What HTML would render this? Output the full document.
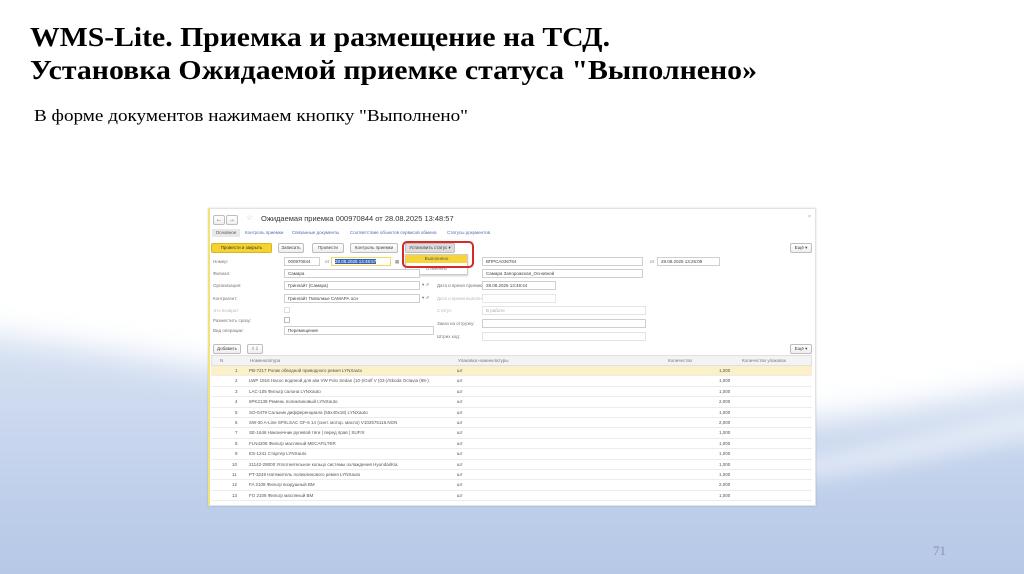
<!DOCTYPE html>
<html><head><meta charset="utf-8"><style>
*{margin:0;padding:0;box-sizing:border-box}
html,body{width:1024px;height:574px;overflow:hidden}
body{position:relative;background:#fff;font-family:"Liberation Sans",sans-serif}
.a{position:absolute;white-space:nowrap}
.lbl{font-size:4.5px;color:#777}
.in{position:absolute;border:1px solid #cfcfcf;background:#fff;height:9px;font-size:4.5px;color:#444;padding-left:3px;line-height:7px}
.btn{position:absolute;border:1px solid #bdbdbd;background:linear-gradient(#fff,#eee);height:10px;font-size:4.5px;color:#444;text-align:center;line-height:8px;border-radius:2px}
.row{position:absolute;left:211px;width:601px;height:10.4px;border-bottom:1px solid #ececec;font-size:4.5px;color:#555;line-height:10px}
.row span{position:absolute}
</style></head><body>
<svg class="a" style="left:0;top:0" width="1024" height="574">
<defs>
<linearGradient id="g1" x1="0" y1="0" x2="0" y2="1"><stop offset="0" stop-color="#d8e2f3"/><stop offset="0.6" stop-color="#bccde9"/><stop offset="1" stop-color="#b0c3e4"/></linearGradient>
<filter id="b" x="-20%" y="-20%" width="140%" height="140%"><feGaussianBlur stdDeviation="16"/></filter>
<filter id="b2" x="-20%" y="-20%" width="140%" height="140%"><feGaussianBlur stdDeviation="10"/></filter>
</defs>
<g filter="url(#b)">
<path d="M-50 330 C200 360 400 410 600 425 C800 440 950 400 1080 380 L1080 640 L-50 640 Z" fill="url(#g1)"/>
</g>
<g filter="url(#b2)">
<path d="M700 470 C850 460 950 420 1080 400 L1080 430 C950 450 850 480 700 490Z" fill="#fff" opacity="0.5"/>
</g>
<text x="30" y="46" font-family="Liberation Serif" font-weight="bold" font-size="27" textLength="580" lengthAdjust="spacingAndGlyphs">WMS-Lite. Приемка и размещение на ТСД.</text>
<text x="30" y="79" font-family="Liberation Serif" font-weight="bold" font-size="27" textLength="727" lengthAdjust="spacingAndGlyphs">Установка Ожидаемой приемке статуса "Выполнено»</text>
<text x="34" y="121" font-family="Liberation Serif" font-size="17" textLength="434" lengthAdjust="spacingAndGlyphs">В форме документов нажимаем кнопку "Выполнено"</text>
<text x="933" y="555" font-family="Liberation Serif" font-size="13" fill="#8a93a8">71</text>
</svg>

<div class="a" style="left:208px;top:208px;width:608px;height:298px;background:#fff;border:1px solid #e2e2e2;border-left:2px solid #f2e27a;box-shadow:0 0 2px rgba(0,0,0,.15)"></div>
<div class="btn" style="left:213px;top:215px;width:12px;font-size:6px">←</div>
<div class="btn" style="left:226px;top:215px;width:12px;font-size:6px">→</div>
<div class="a" style="left:246px;top:213px;font-size:8px;color:#ccc">☆</div>
<div class="a" style="left:261px;top:214px;font-size:7.5px;color:#333">Ожидаемая приемка 000970844 от 28.08.2025 13:48:57</div>
<div class="a" style="left:808px;top:214px;font-size:5px;color:#999">×</div>
<div class="a" style="left:212px;top:229px;width:28px;height:8px;background:#e8e8e8;font-size:4.5px;color:#555;text-align:center;line-height:8px">Основное</div>
<div class="a" style="left:245px;top:229px;font-size:4.5px;color:#4a6fb5;line-height:8px">Контроль приемки</div>
<div class="a" style="left:292px;top:229px;font-size:4.5px;color:#4a6fb5;line-height:8px">Связанные документы</div>
<div class="a" style="left:350px;top:229px;font-size:4.5px;color:#4a6fb5;line-height:8px">Соответствие объектов сервисов обмена</div>
<div class="a" style="left:447px;top:229px;font-size:4.5px;color:#4a6fb5;line-height:8px">Статусы документов</div>

<div class="btn" style="left:211px;top:243px;width:61px;background:#f5d230;border-color:#d8b820;color:#333">Провести и закрыть</div>
<div class="btn" style="left:278px;top:243px;width:26px">Записать</div>
<div class="btn" style="left:312px;top:243px;width:32px">Провести</div>
<div class="btn" style="left:350px;top:243px;width:48px">Контроль приемки</div>
<div class="btn" style="left:405px;top:243px;width:50px;background:#ddd">Установить статус ▾</div>
<div class="btn" style="left:790px;top:243px;width:22px">Ещё ▾</div>

<div class="a" style="left:405px;top:254px;width:63px;height:21px;background:#fff;border:1px solid #ccc;box-shadow:0 1px 2px rgba(0,0,0,.2)"></div>
<div class="a" style="left:406px;top:255px;width:61px;height:8px;background:#f7d43a;font-size:4.5px;text-align:center;line-height:8px;color:#555">Выполнено</div>
<div class="a" style="left:406px;top:266px;width:61px;font-size:4.5px;text-align:center;color:#777">Отменено</div>
<div class="a" style="left:402px;top:241px;width:72px;height:27px;border:2px solid #d42a2a;border-radius:5px"></div>

<div class="a lbl" style="left:213px;top:259px">Номер:</div>
<div class="a lbl" style="left:213px;top:271px">Филиал:</div>
<div class="a lbl" style="left:213px;top:283px">Организация:</div>
<div class="a lbl" style="left:213px;top:296px">Контрагент:</div>
<div class="a lbl" style="left:213px;top:308px;color:#bbb">Это возврат:</div>
<div class="a lbl" style="left:213px;top:318px">Разместить сразу:</div>
<div class="a lbl" style="left:213px;top:328px">Вид операции:</div>

<div class="in" style="left:284px;top:257px;width:36px">000970844</div>
<div class="a lbl" style="left:325px;top:259px">от</div>
<div class="in" style="left:331px;top:257px;width:60px;border-color:#f0d860"><span style="background:#3a63b8;color:#fff">28.08.2025 13:48:57</span></div>
<div class="a lbl" style="left:395px;top:259px">▦</div>
<div class="in" style="left:284px;top:269px;width:136px">Самара</div>
<div class="in" style="left:284px;top:281px;width:136px">Гринлайт (Самара)</div>
<div class="a lbl" style="left:422px;top:282px">▾ ⇗</div>
<div class="in" style="left:284px;top:294px;width:136px">Гринлайт Поволжье САМАРА осн</div>
<div class="a lbl" style="left:422px;top:295px">▾ ⇗</div>
<div class="a" style="left:284px;top:307px;width:6px;height:6px;border:1px solid #ddd"></div>
<div class="a" style="left:284px;top:317px;width:6px;height:6px;border:1px solid #bbb"></div>
<div class="in" style="left:284px;top:326px;width:150px">Перемещение</div>

<div class="in" style="left:482px;top:257px;width:161px">ВПРСА036784</div>
<div class="a lbl" style="left:650px;top:259px">от</div>
<div class="in" style="left:657px;top:257px;width:63px">28.08.2025 13:26:09</div>
<div class="in" style="left:482px;top:269px;width:161px">Самара Запорожская_Основной</div>
<div class="a lbl" style="left:437px;top:283px">Дата и время приемки:</div>
<div class="in" style="left:482px;top:281px;width:74px">28.08.2025 13:48:44</div>
<div class="a lbl" style="left:437px;top:296px;color:#bbb">Дата и время выполнения:</div>
<div class="in" style="left:482px;top:294px;width:74px;border-color:#e8e8e8"></div>
<div class="a lbl" style="left:437px;top:308px;color:#bbb">Статус:</div>
<div class="in" style="left:482px;top:306px;width:164px;border-color:#e4e4e4;color:#aaa">В работе</div>
<div class="a lbl" style="left:437px;top:321px">Заказ на отгрузку:</div>
<div class="in" style="left:482px;top:319px;width:164px"></div>
<div class="a lbl" style="left:437px;top:334px">Штрих код:</div>
<div class="in" style="left:482px;top:332px;width:164px;border-color:#e4e4e4"></div>

<div class="btn" style="left:213px;top:344px;width:28px">Добавить</div>
<div class="btn" style="left:247px;top:344px;width:16px;color:#2a8a6a">⇧⇩</div>
<div class="btn" style="left:790px;top:344px;width:22px">Ещё ▾</div>

<div class="a" style="left:211px;top:355px;width:601px;height:11px;background:#f3f3f3;border:1px solid #e0e0e0;font-size:4.5px;color:#777;line-height:9px">
<span class="a" style="left:8px">N</span><span class="a" style="left:38px">Номенклатура</span><span class="a" style="left:246px">Упаковка номенклатуры</span><span class="a" style="left:456px">Количество</span><span class="a" style="left:530px">Количество упаковок</span></div>

<div class="row" style="top:366px;background:#fbf0c8"><span style="left:24px">1</span><span style="left:38px">PB-7217 Ролик обводной приводного ремня LYNXauto</span><span style="left:246px">шт</span><span style="left:508px">1,000</span></div>
<div class="row" style="top:376.4px"><span style="left:24px">2</span><span style="left:38px">LWP 1916 Насос водяной для а/м VW Polo Sedan (10-)/Golf V (03-)/Skoda Octavia (98-)</span><span style="left:246px">шт</span><span style="left:508px">1,000</span></div>
<div class="row" style="top:386.8px"><span style="left:24px">3</span><span style="left:38px">LAC-105 Фильтр салона LYNXauto</span><span style="left:246px">шт</span><span style="left:508px">1,000</span></div>
<div class="row" style="top:397.2px"><span style="left:24px">4</span><span style="left:38px">6PK2138 Ремень поликлиновый LYNXauto</span><span style="left:246px">шт</span><span style="left:508px">2,000</span></div>
<div class="row" style="top:407.6px"><span style="left:24px">5</span><span style="left:38px">SO-0479 Сальник дифференциала (55x40x18) LYNXauto</span><span style="left:246px">шт</span><span style="left:508px">1,000</span></div>
<div class="row" style="top:418px"><span style="left:24px">6</span><span style="left:38px">SW-30 A-Line SP/ILSAC GF-6 1л (синт. мотор. масло) V102575116.NGN</span><span style="left:246px">шт</span><span style="left:508px">2,000</span></div>
<div class="row" style="top:428.4px"><span style="left:24px">7</span><span style="left:38px">SE-1646 Наконечник рулевой тяги | перед прав | SUFIX</span><span style="left:246px">шт</span><span style="left:508px">1,000</span></div>
<div class="row" style="top:438.8px"><span style="left:24px">8</span><span style="left:38px">FLN4206 Фильтр масляный MECAFILTER</span><span style="left:246px">шт</span><span style="left:508px">1,000</span></div>
<div class="row" style="top:449.2px"><span style="left:24px">9</span><span style="left:38px">ES-1241 Стартер LYNXauto</span><span style="left:246px">шт</span><span style="left:508px">1,000</span></div>
<div class="row" style="top:459.6px"><span style="left:21px">10</span><span style="left:38px">21142-29000 Уплотнительное кольцо системы охлаждения Hyundai/Kia</span><span style="left:246px">шт</span><span style="left:508px">1,000</span></div>
<div class="row" style="top:470px"><span style="left:21px">11</span><span style="left:38px">PT-3249 Натяжитель поликлинового ремня LYNXauto</span><span style="left:246px">шт</span><span style="left:508px">1,000</span></div>
<div class="row" style="top:480.4px"><span style="left:21px">12</span><span style="left:38px">FA 2108 Фильтр воздушный BM</span><span style="left:246px">шт</span><span style="left:508px">2,000</span></div>
<div class="row" style="top:490.8px"><span style="left:21px">13</span><span style="left:38px">FO 2108 Фильтр масляный BM</span><span style="left:246px">шт</span><span style="left:508px">1,000</span></div>
</body></html>
